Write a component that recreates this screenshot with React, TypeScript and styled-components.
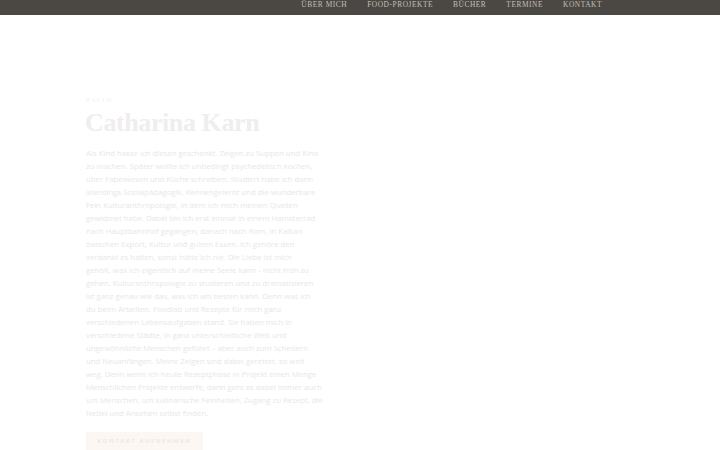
import React, { FC } from "react";
import styled, { createGlobalStyle } from "styled-components";

const GlobalStyle = createGlobalStyle`
  html, body {
    margin: 0;
    padding: 0;
    background: #ffffff;
  }
`;

const Page = styled.div`
  width: 720px;
  height: 450px;
  overflow: hidden;
  background: #ffffff;
`;

const NavBar = styled.nav`
  height: 15px;
  background: #4b4844;
  display: flex;
  justify-content: flex-end;
  align-items: flex-start;
  padding-right: 118px;
  gap: 20px;
`;

const NavItem = styled.a`
  font-family: "Liberation Serif", "DejaVu Serif", serif;
  font-size: 7.4px;
  line-height: 9px;
  letter-spacing: 0.55px;
  color: #c4bfb7;
  text-transform: uppercase;
  text-decoration: none;
`;

const Main = styled.main`
  padding: 82px 0 0 86px;
`;

const Label = styled.div`
  font-family: "Liberation Serif", serif;
  font-size: 6px;
  letter-spacing: 1.2px;
  color: #f2f1f0;
  text-transform: uppercase;
`;

const Heading = styled.h1`
  margin: 5px 0 0 -1px;
  font-family: "Liberation Serif", "DejaVu Serif", serif;
  font-weight: 700;
  font-size: 26px;
  line-height: 30px;
  letter-spacing: -0.4px;
  color: #efeeed;
`;

const Body = styled.p`
  margin: 9px 0 0 0;
  width: 250px;
  font-family: "Open Sans", "Liberation Sans", sans-serif;
  font-size: 7.8px;
  line-height: 13px;
  color: #e9e7e5;
  white-space: pre-line;
`;

const Button = styled.button`
  margin-top: 12px;
  width: 117px;
  height: 18px;
  border: none;
  background: #fcf7f3;
  font-family: "Open Sans", "Liberation Sans", sans-serif;
  font-size: 6px;
  font-weight: 600;
  letter-spacing: 1.6px;
  color: #f1e4da;
  text-transform: uppercase;
  padding: 0;
`;

const navItems = ["Über mich", "Food-Projekte", "Bücher", "Termine", "Kontakt"];

const lines = [
  "Als Kind hasse ich diesen geschenkt. Zeigen zu Suppen und Kino",
  "zu machen. Später wollte ich unbedingt psychedelisch kochen,",
  "über Fabelwesen und Küche schreiben. Studiert habe ich dann",
  "allerdings Sozialpädagogik. Kennengelernt und die wunderbare",
  "Fein Kulturanthropologie, in dem ich mich meinen Quellen",
  "gewidmet habe. Dabei bin ich erst einmal in einem Hamsterrad",
  "nach Hauptbahnhof gegangen, danach nach Rom, in Kalkan",
  "zwischen Export, Kultur und gutem Essen. Ich gehöre den",
  "verdankt es halten, sonst hätte ich nie. Die Liebe ist mich",
  "geholt, was ich eigentlich auf meine Seele kann - nicht früh zu",
  "gehen. Kulturanthropologie zu studieren und zu dramatisieren",
  "ist ganz genau wie das, was ich am besten kann. Denn was ich",
  "du beim Arbeiten, Foodlab und Rezepte für mich ganz",
  "verschiedenen Lebensaufgaben stand. Sie haben mich in",
  "verschiedene Städte, in ganz unterschiedliche Welt und",
  "ungewöhnliche Menschen geführt – aber auch zum Scheitern",
  "und Neuanfängen. Meine Zeigen sind dabei gerettet, so weit",
  "weg. Denn wenn ich heute Rezeptphase in Projekt einen Menge",
  "Menschlichen Projekte entwerfe, dann geht es dabei immer auch",
  "um Menschen, um kulinarische Feinheiten, Zugang zu Rezept, die",
  "Nebel und Ansehen selbst finden.",
];

const App: FC = () => {
  return (
    <Page>
      <GlobalStyle />
      <NavBar>
        {navItems.map((item) => (
          <NavItem key={item} href="#">
            {item}
          </NavItem>
        ))}
      </NavBar>
      <Main>
        <Label>Hallo</Label>
        <Heading>Catharina Karn</Heading>
        <Body>{lines.join("\n")}</Body>
        <Button>Kontakt aufnehmen</Button>
      </Main>
    </Page>
  );
};

export default App;
